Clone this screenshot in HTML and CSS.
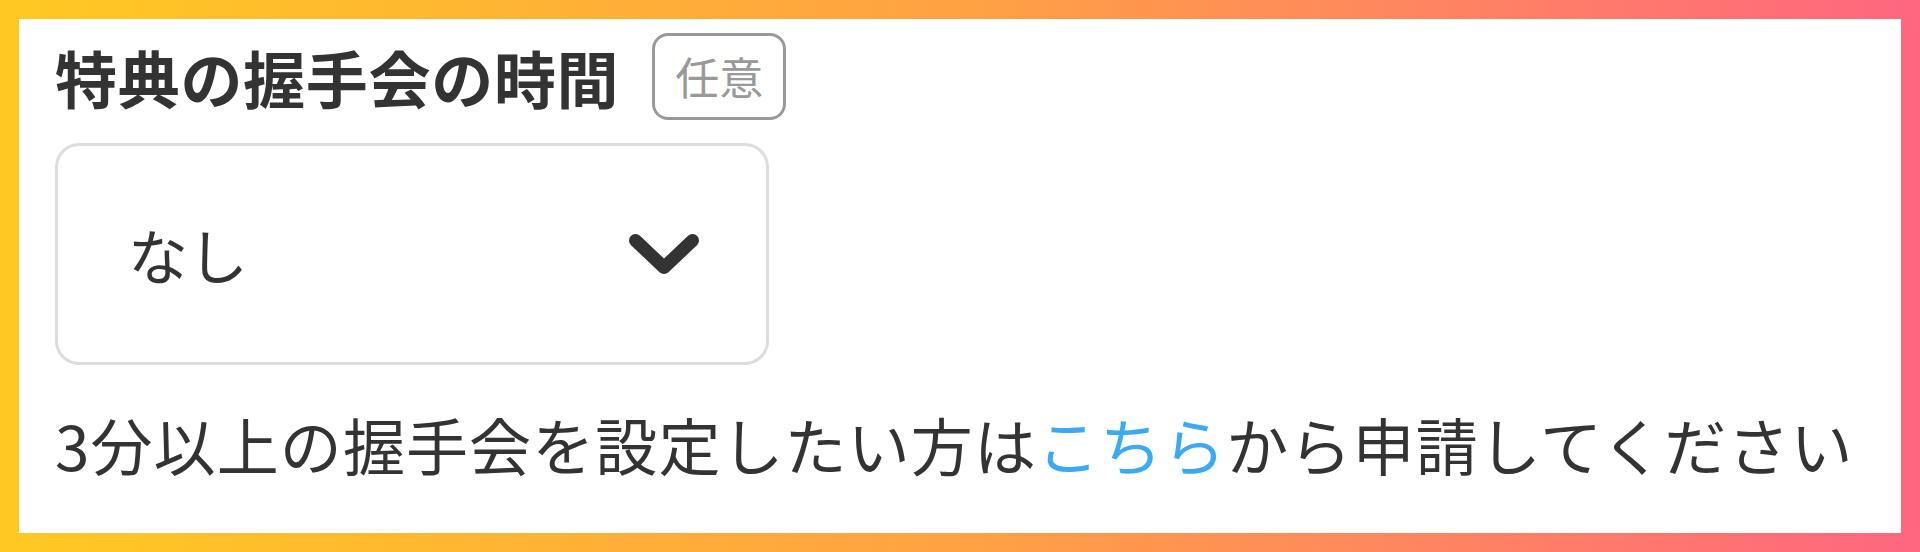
FILE: index.html
```html
<!DOCTYPE html>
<html lang="ja">
<head>
<meta charset="utf-8">
<title>特典の握手会の時間</title>
<link rel="stylesheet" href="styles.css">
</head>
<body>
<div class="page">
  <div class="card">
    <div class="label-row">
      <h2 class="label">特典の握手会の時間</h2>
      <span class="badge">任意</span>
    </div>
    <div class="select">
      <span class="select-value">なし</span>
      <svg class="chevron" width="70" height="40" viewBox="0 0 70 40" aria-hidden="true">
        <polyline points="6.5,6.5 35,33.5 63.5,6.5" fill="none" stroke="#333" stroke-width="13" stroke-linecap="round" stroke-linejoin="round"/>
      </svg>
    </div>
    <p class="note">3分以上の握手会を設定したい方は<a class="link" href="#">こちら</a>から申請してください</p>
  </div>
</div>
</body>
</html>
```
FILE: styles.css
```css
* { box-sizing: border-box; }
html, body { margin: 0; padding: 0; }
body {
  font-family: "Noto Sans CJK JP", "Noto Sans", sans-serif;
  color: #333;
}
.page {
  width: 1920px;
  height: 552px;
  padding: 19px;
  background: linear-gradient(90deg, #FFC922 0%, #FFA243 50%, #FF6680 100%);
  display: flex;
}
.card {
  flex: 1;
  background: #fff;
  padding: 14px 36px 0;
  display: flex;
  flex-direction: column;
  align-items: flex-start;
}
.label-row {
  display: flex;
  align-items: center;
  gap: 33px;
}
.label {
  margin: 0;
  font-size: 62px;
  line-height: 62px;
  font-weight: 700;
  letter-spacing: 0.7px;
  color: #333;
}
.badge {
  font-size: 44px;
  line-height: 50px;
  padding: 15px 20px 16px;
  border: 3px solid #999;
  border-radius: 16px;
  color: #999;
}
.select {
  margin-top: 23px;
  width: 714px;
  height: 222px;
  border: 3px solid #dddddd;
  border-radius: 24px;
  display: flex;
  align-items: center;
  justify-content: space-between;
  padding: 0 67px 0 70px;
}
.select-value {
  font-size: 60px;
  line-height: 60px;
  color: #333;
}
.chevron { display: block; }
.note {
  margin: 48px 0 0;
  font-size: 62px;
  line-height: 62px;
  letter-spacing: 1.1px;
  color: #333;
  white-space: nowrap;
}
.link {
  color: #3CA9F5;
  text-decoration: none;
}
```
